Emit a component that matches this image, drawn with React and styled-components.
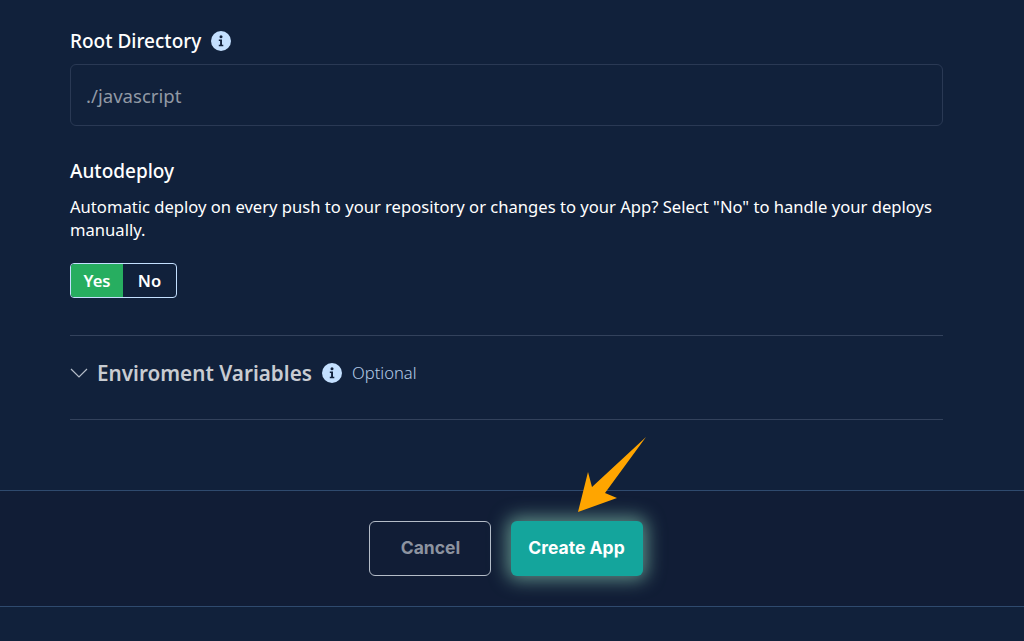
import React from 'react';
import styled, {createGlobalStyle} from 'styled-components';

const GlobalStyle = createGlobalStyle`
  html, body {
    margin: 0;
    padding: 0;
    height: 100%;
    overflow: hidden;
    background: #11213b;
    font-family: "Noto Sans", sans-serif;
  }
`;

const InfoIcon = ({className}) => (
  <svg className={className} width="20" height="20" viewBox="0 0 20 20" aria-hidden="true">
    <circle cx="10" cy="10" r="10" fill="#c4e0ff" />
    <circle cx="10" cy="5.8" r="1.5" fill="#11213b" />
    <path d="M7.8 8.6h3.2v5.2h1.3v1.4H7.8v-1.4h1.3v-3.8H7.8z" fill="#11213b" />
  </svg>
);

export default function App() {
  return (
    <Page>
      <GlobalStyle />
      <Content>
        <LabelRow>
          <Label>Root Directory</Label>
          <InfoIcon />
        </LabelRow>
        <TextInput readOnly placeholder="./javascript" />

        <SectionTitle>Autodeploy</SectionTitle>
        <Description>
          Automatic deploy on every push to your repository or changes to your App? Select "No" to handle your deploys manually.
        </Description>
        <Toggle>
          <ToggleOption $active>Yes</ToggleOption>
          <ToggleOption>No</ToggleOption>
        </Toggle>

        <Collapse>
          <svg width="18" height="10" viewBox="0 0 18 10" fill="none" aria-hidden="true">
            <path d="M1 1l8 8 8-8" stroke="#b4bcc8" strokeWidth="1.2" />
          </svg>
          <CollapseTitle>Enviroment Variables</CollapseTitle>
          <InfoIcon />
          <Optional>Optional</Optional>
        </Collapse>
      </Content>

      <Footer>
        <CancelButton>Cancel</CancelButton>
        <CreateButton>
          Create App
          <Arrow width="72" height="80" viewBox="0 0 72 80" aria-hidden="true">
            <path d="M70 2L29 58 L41 63 L2 77 L12 37 L16 52 Z" fill="#ffa500" />
          </Arrow>
        </CreateButton>
      </Footer>
    </Page>
  );
}

const Page = styled.div`
  width: 1024px;
  height: 641px;
  display: flex;
  flex-direction: column;
  overflow: hidden;
`;

const Content = styled.div`
  height: 490px;
  box-sizing: border-box;
  padding: 28px 81px 0 70px;
`;

const LabelRow = styled.div`
  display: flex;
  align-items: center;
  gap: 10px;
  height: 26px;
`;

const Label = styled.span`
  color: #fff;
  font-size: 19px;
  font-weight: 500;
  line-height: 26px;
`;

const TextInput = styled.input`
  display: block;
  box-sizing: border-box;
  width: 100%;
  height: 62px;
  margin-top: 10px;
  padding: 0 15px;
  background: transparent;
  border: 1px solid #2a3954;
  border-radius: 6px;
  font-family: inherit;
  font-size: 18.6px;
  outline: none;

  &::placeholder {
    color: #9199a5;
    opacity: 1;
  }
`;

const SectionTitle = styled.h3`
  margin: 32px 0 0;
  color: #fff;
  font-size: 19px;
  font-weight: 500;
  line-height: 26px;
`;

const Description = styled.p`
  margin: 11px 0 0;
  color: #fff;
  font-size: 16.6px;
  line-height: 23px;
`;

const Toggle = styled.div`
  display: inline-flex;
  box-sizing: border-box;
  height: 35px;
  width: 107px;
  margin-top: 22px;
  border: 1px solid #c4e0ff;
  border-radius: 4px;
  overflow: hidden;
`;

const ToggleOption = styled.div`
  display: flex;
  align-items: center;
  justify-content: center;
  width: ${({$active}) => ($active ? '52px' : '53px')};
  padding-bottom: 1px;
  color: #fff;
  font-size: 16.6px;
  font-weight: 600;
  background: ${({$active}) => ($active ? '#27ae60' : 'transparent')};
`;

const Collapse = styled.div`
  display: flex;
  align-items: center;
  box-sizing: border-box;
  height: 85px;
  margin-top: 37px;
  padding-bottom: 10px;
  border-top: 1px solid #33425c;
  border-bottom: 1px solid #33425c;

  svg:first-child {
    margin-right: 9px;
  }
`;

const CollapseTitle = styled.span`
  color: #c8ccd2;
  font-size: 20.7px;
  font-weight: 600;
  margin-right: 10px;
`;

const Optional = styled.span`
  margin-left: 10px;
  color: #b4cbe6;
  font-size: 16.6px;
  font-weight: 300;
`;

const Footer = styled.footer`
  box-sizing: border-box;
  height: 117px;
  display: flex;
  justify-content: center;
  align-items: center;
  gap: 20px;
  padding-right: 13px;
  background: #111d36;
  border-top: 1px solid #2f4a6e;
  border-bottom: 1px solid #2f4a6e;
`;

const CancelButton = styled.button`
  box-sizing: border-box;
  width: 122px;
  height: 55px;
  padding: 0 0 3px 2px;
  background: transparent;
  border: 1px solid #b4bcc8;
  border-radius: 6px;
  color: #8d93a0;
  font-family: Inter, sans-serif;
  font-size: 17.5px;
  font-weight: 700;
`;

const CreateButton = styled.button`
  position: relative;
  box-sizing: border-box;
  width: 132px;
  height: 55px;
  padding: 0 0 3px;
  background: #14a59c;
  border: none;
  border-radius: 6px;
  color: #fff;
  font-family: Inter, sans-serif;
  font-size: 17.5px;
  font-weight: 700;
  box-shadow: 0 0 18px 4px rgba(150, 222, 192, 0.58);
`;

const Arrow = styled.svg`
  position: absolute;
  left: 65px;
  top: -86px;
`;
